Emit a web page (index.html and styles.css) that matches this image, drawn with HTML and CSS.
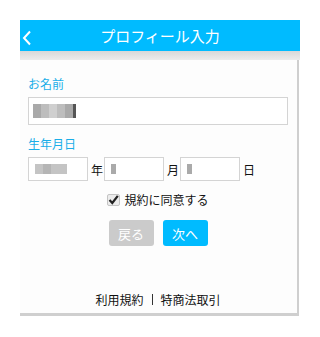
FILE: index.html
```html
<!DOCTYPE html>
<html lang="ja">
<head>
<meta charset="utf-8">
<link rel="stylesheet" href="styles.css">
</head>
<body>
<div class="page">
  <div class="header">
    <span class="back"><svg width="10" height="16" viewBox="0 0 10 16"><path d="M8 1.5 L2 8 L8 14.5" fill="none" stroke="#fff" stroke-width="2"/></svg></span>
    <span class="title">プロフィール入力</span>
  </div>
  <div class="strip"></div>
  <div class="card">
    <div class="label">お名前</div>
    <div class="input name"><span class="mosaic m-name"><i></i><i></i><i></i><i></i><i></i><i></i></span></div>
    <div class="label">生年月日</div>
    <div class="date-row">
      <div class="input date"><span class="mosaic m-year"><i></i><i></i><i></i><i></i></span></div><span class="unit">年</span>
      <div class="input date"><span class="mosaic m-small"><i></i></span></div><span class="unit">月</span>
      <div class="input date"><span class="mosaic m-small"><i></i></span></div><span class="unit">日</span>
    </div>
    <div class="agree"><span class="check"><svg width="11" height="11" viewBox="0 0 11 11"><path d="M1.5 6 L4.3 9 L9.8 1.8" fill="none" stroke="#222" stroke-width="2.2"/></svg></span><span>規約に同意する</span></div>
    <div class="buttons">
      <span class="btn gray">戻る</span>
      <span class="btn blue">次へ</span>
    </div>
    <div class="footer"><span>利用規約</span><span class="sep"></span><span>特商法取引</span></div>
  </div>
</div>
</body>
</html>
```
FILE: styles.css
```css
* { box-sizing: border-box; }
html, body { margin: 0; padding: 0; background: #fff; }
body { font-family: "Noto Sans CJK JP", "Noto Sans", sans-serif; }
.page { margin: 20px 0 0 20px; width: 280px; }
.header {
  height: 31px; background: #00bbff; color: #fff;
  display: flex; align-items: center; justify-content: center;
  position: relative;
}
.back { position: absolute; left: 2px; top: 7px; }
.title { font-size: 15px; line-height: 1; }
.strip { height: 9px; background: linear-gradient(#d8d8d8, #ececec); }
.card {
  width: 279px; background: #fdfdfd;
  border-right: 2px solid #cfcfcf; border-bottom: 3px solid #cfcfcf;
  padding: 16px 9px 0 8px; height: 256px;
}
.label { color: #1aaee8; font-size: 12px; line-height: 16px; margin-bottom: 5px; }
.input {
  background: #fff; border: 1px solid #d4d4d4; height: 28px;
  display: flex; align-items: center; padding-left: 4px;
}
.name { width: 260px; margin-bottom: 11px; }
.date-row { display: flex; align-items: center; margin-top: 1px; }
.date { width: 60px; height: 24px; }
.unit { font-size: 12px; color: #111; width: 16px; padding-left: 3px; }
.mosaic { display: flex; }
.mosaic i { display: block; width: 8px; height: 14px; background: #a9a9a9; }
.m-name i:nth-child(2n) { background: #bdbdbd; }
.m-name i:nth-child(3) { background: #cfcfcf; }
.m-name i:last-child { width: 3px; background: #555; }
.m-year { margin-left: 2px; }
.m-year i { height: 10px; background: #c4c4c4; }
.m-year i:nth-child(2) { background: #b5b5b5; }
.m-small i { width: 5px; height: 10px; background: #aaa; margin-left: 2px; }
.agree {
  display: flex; align-items: center; justify-content: center;
  font-size: 12px; color: #111; margin-top: 10px; gap: 4px;
}
.check {
  width: 13px; height: 12px; border: 1px solid #c4c4c4; border-radius: 2px; background: #ececec;
  display: flex; align-items: center; justify-content: center;
}
.buttons { display: flex; justify-content: center; gap: 9px; margin-top: 12px; }
.btn {
  width: 45px; height: 26px; border-radius: 3px; color: #fff; font-size: 13px;
  display: flex; align-items: center; justify-content: center;
}
.gray { background: #cbcbcb; }
.blue { background: #00bbff; }
.footer {
  display: flex; justify-content: center; align-items: center;
  font-size: 12px; color: #111; margin-top: 45px;
}
.sep { width: 1px; height: 11px; background: #333; margin: 0 8px; }
```
